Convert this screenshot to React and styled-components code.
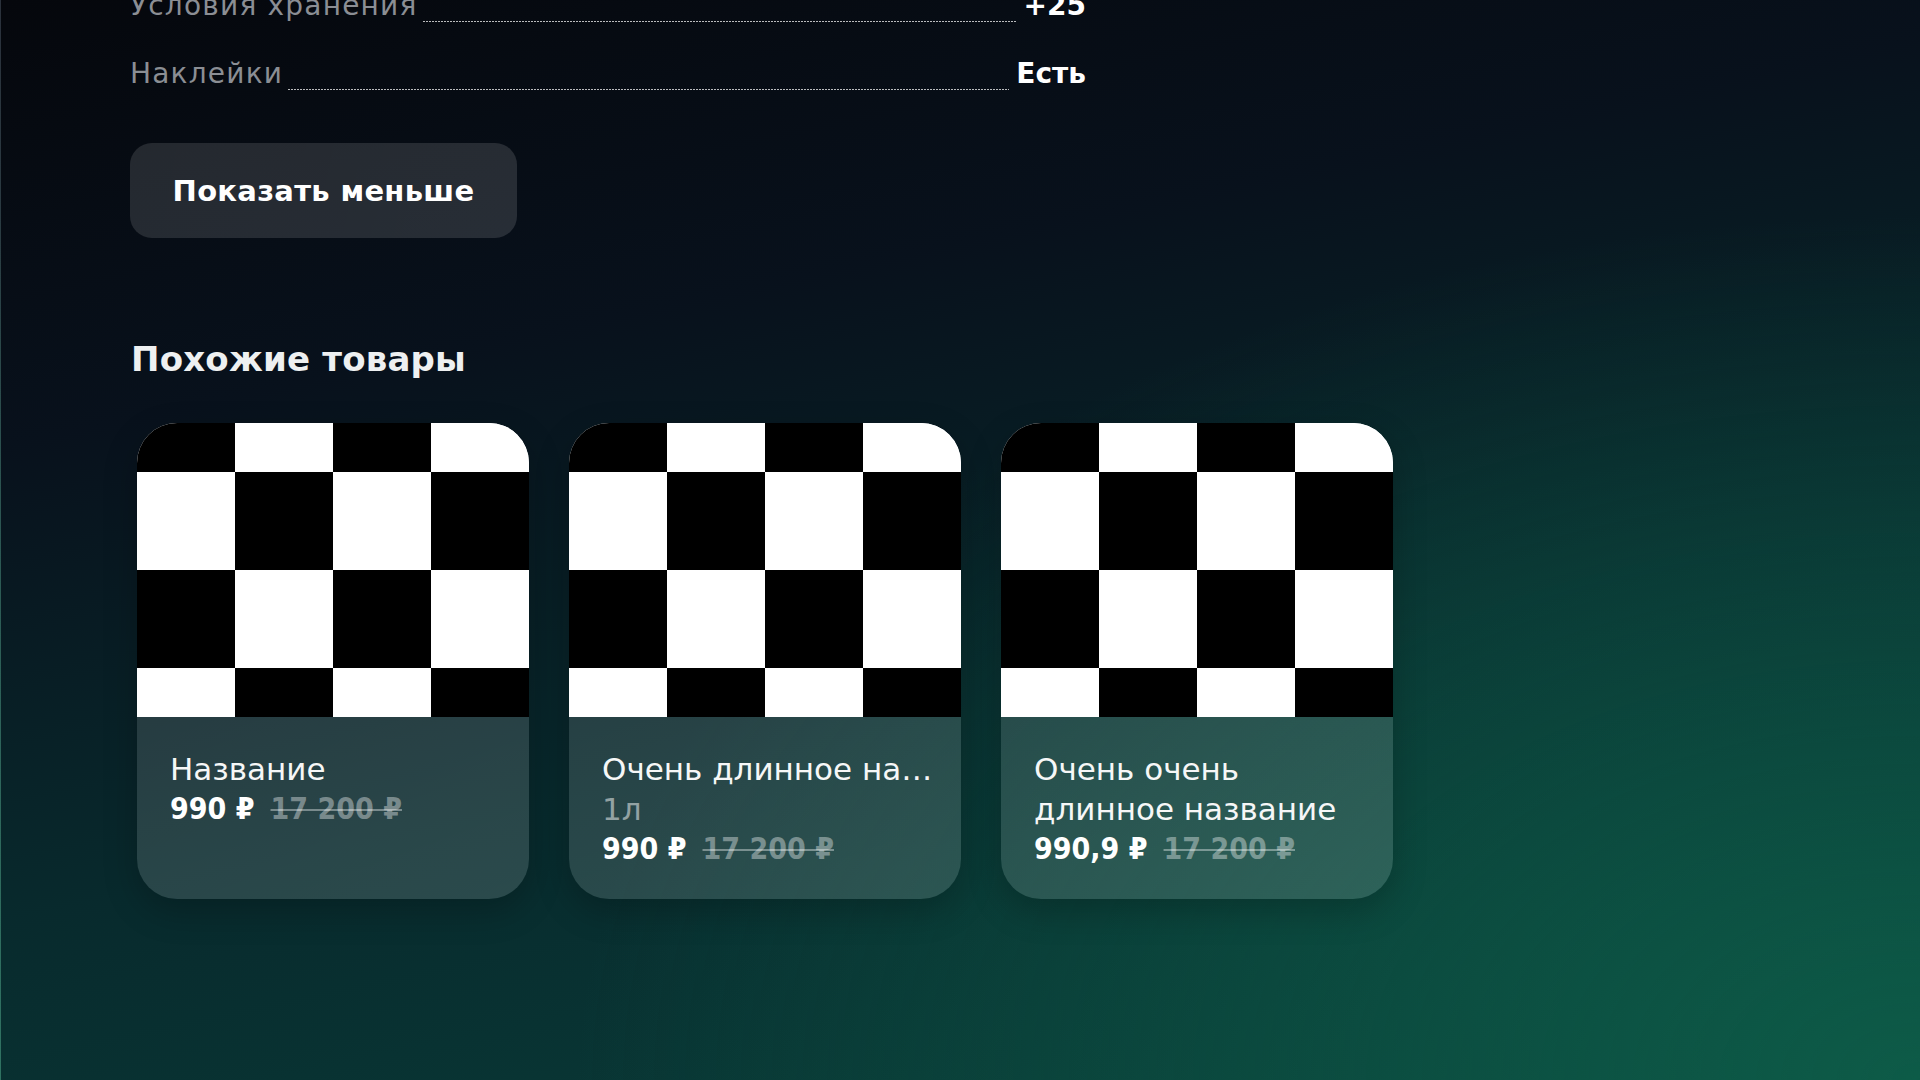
import React from 'react';
import styled, { createGlobalStyle } from 'styled-components';

const GlobalStyle = createGlobalStyle`
    html, body {
        margin: 0;
        padding: 0;
    }
    body {
        font-family: "DejaVu Sans", "Noto Sans", sans-serif;
        color: #fff;
        background: #06080d;
    }
`

const specs = [
    { label: 'Условия хранения', value: '+25' },
    { label: 'Наклейки', value: 'Есть' },
]

const products = [
    { name: 'Название', price: '990 ₽', oldPrice: '17 200 ₽' },
    { name: 'Очень длинное название', volume: '1л', price: '990 ₽', oldPrice: '17 200 ₽', oneLine: true },
    { name: 'Очень очень длинное название', price: '990,9 ₽', oldPrice: '17 200 ₽' },
]

const App = () => {
    return (
        <Page>
            <GlobalStyle />
            <Content>
                <SpecList>
                    {specs.map((s, i) => (
                        <SpecRow key={i}>
                            <SpecLabel>{s.label}</SpecLabel>
                            <Leader />
                            <SpecValue>{s.value}</SpecValue>
                        </SpecRow>
                    ))}
                </SpecList>

                <ToggleButton type="button">Показать меньше</ToggleButton>

                <SectionTitle>Похожие товары</SectionTitle>

                <CardRow>
                    {products.map((p, i) => (
                        <Card key={i}>
                            <Picture />
                            <CardInfo>
                                <CardName $oneLine={p.oneLine}>{p.name}</CardName>
                                {p.volume ? <CardVolume>{p.volume}</CardVolume> : null}
                                <PriceLine>
                                    <Price>{p.price}</Price>
                                    <OldPrice>{p.oldPrice}</OldPrice>
                                </PriceLine>
                            </CardInfo>
                        </Card>
                    ))}
                </CardRow>
            </Content>
        </Page>
    );
}

export default App;

const Page = styled.div`
    width: 100%;
    height: 100vh;
    overflow: hidden;
    box-sizing: border-box;
    border-left: 1px solid rgba(255, 255, 255, 0.14);
    background:
        radial-gradient(ellipse 70% 80% at 100% 100%, rgba(14, 96, 74, 0.85) 0%, rgba(14, 96, 74, 0) 100%),
        linear-gradient(168deg, #05070c 0%, #08111c 30%, #082a2d 62%, #093f3a 100%);
`

const Content = styled.div`
    padding-left: 129px;
    display: flex;
    flex-direction: column;
    align-items: flex-start;
`

const SpecList = styled.div`
    margin-top: -12px;
    width: 956px;
    display: flex;
    flex-direction: column;
    gap: 32px;
`

const SpecRow = styled.div`
    display: flex;
    align-items: flex-end;
    font-size: 28px;
    line-height: 36px;
`

const SpecLabel = styled.span`
    color: #8b8e94;
    letter-spacing: 1.2px;
`

const Leader = styled.span`
    flex: 1;
    height: 1px;
    margin: 0 7px 2px 5px;
    background-image: linear-gradient(90deg, rgba(255, 255, 255, 0.72) 0 2px, transparent 2px 3px);
    background-size: 3px 1px;
    background-repeat: repeat-x;
`

const SpecValue = styled.span`
    font-weight: 700;
    color: #fff;
`

const ToggleButton = styled.button`
    margin-top: 51px;
    width: 387px;
    height: 95px;
    border: none;
    border-radius: 22px;
    background: linear-gradient(100deg, rgba(255, 255, 255, 0.12), rgba(255, 255, 255, 0.13));
    color: #fff;
    font-family: "DejaVu Sans", sans-serif;
    font-size: 29px;
    font-weight: 700;
    letter-spacing: 0.3px;
    cursor: pointer;
`

const SectionTitle = styled.h2`
    margin: 99px 0 0 1px;
    font-size: 34px;
    line-height: 44px;
    font-weight: 700;
    letter-spacing: 0.2px;
    color: #eef0f1;
`

const CardRow = styled.div`
    margin-top: 42px;
    padding-left: 7px;
    display: flex;
    gap: 40px;
`

const Card = styled.div`
    width: 392px;
    height: 476px;
    border-radius: 40px;
    overflow: hidden;
    display: flex;
    flex-direction: column;
    box-shadow: 0 12px 34px rgba(0, 0, 0, 0.22);
`

const Picture = styled.div`
    height: 294px;
    flex-shrink: 0;
    background-color: #fff;
    background-image: repeating-conic-gradient(#000 0 25%, #fff 0 50%);
    background-size: 196px 196px;
    background-position: 0 49px;
`

const CardInfo = styled.div`
    flex: 1;
    padding: 32px 24px 0 33px;
    background: linear-gradient(160deg, rgba(255, 255, 255, 0.12), rgba(255, 255, 255, 0.14));
    font-size: 31px;
    line-height: 40px;
    min-width: 0;
`

const CardName = styled.div`
    color: #f6f7f7;
    ${props => props.$oneLine ? `
        white-space: nowrap;
        overflow: hidden;
        text-overflow: ellipsis;
    ` : ''}
`

const CardVolume = styled.div`
    color: rgba(255, 255, 255, 0.5);
`

const PriceLine = styled.div`
    display: flex;
    gap: 16px;
    font-family: "DejaVu Sans Condensed", "DejaVu Sans", sans-serif;
    font-size: 30px;
    font-weight: 700;
`

const Price = styled.span`
    color: #fff;
`

const OldPrice = styled.span`
    color: rgba(255, 255, 255, 0.38);
    text-decoration: line-through;
    text-decoration-thickness: 2px;
`
